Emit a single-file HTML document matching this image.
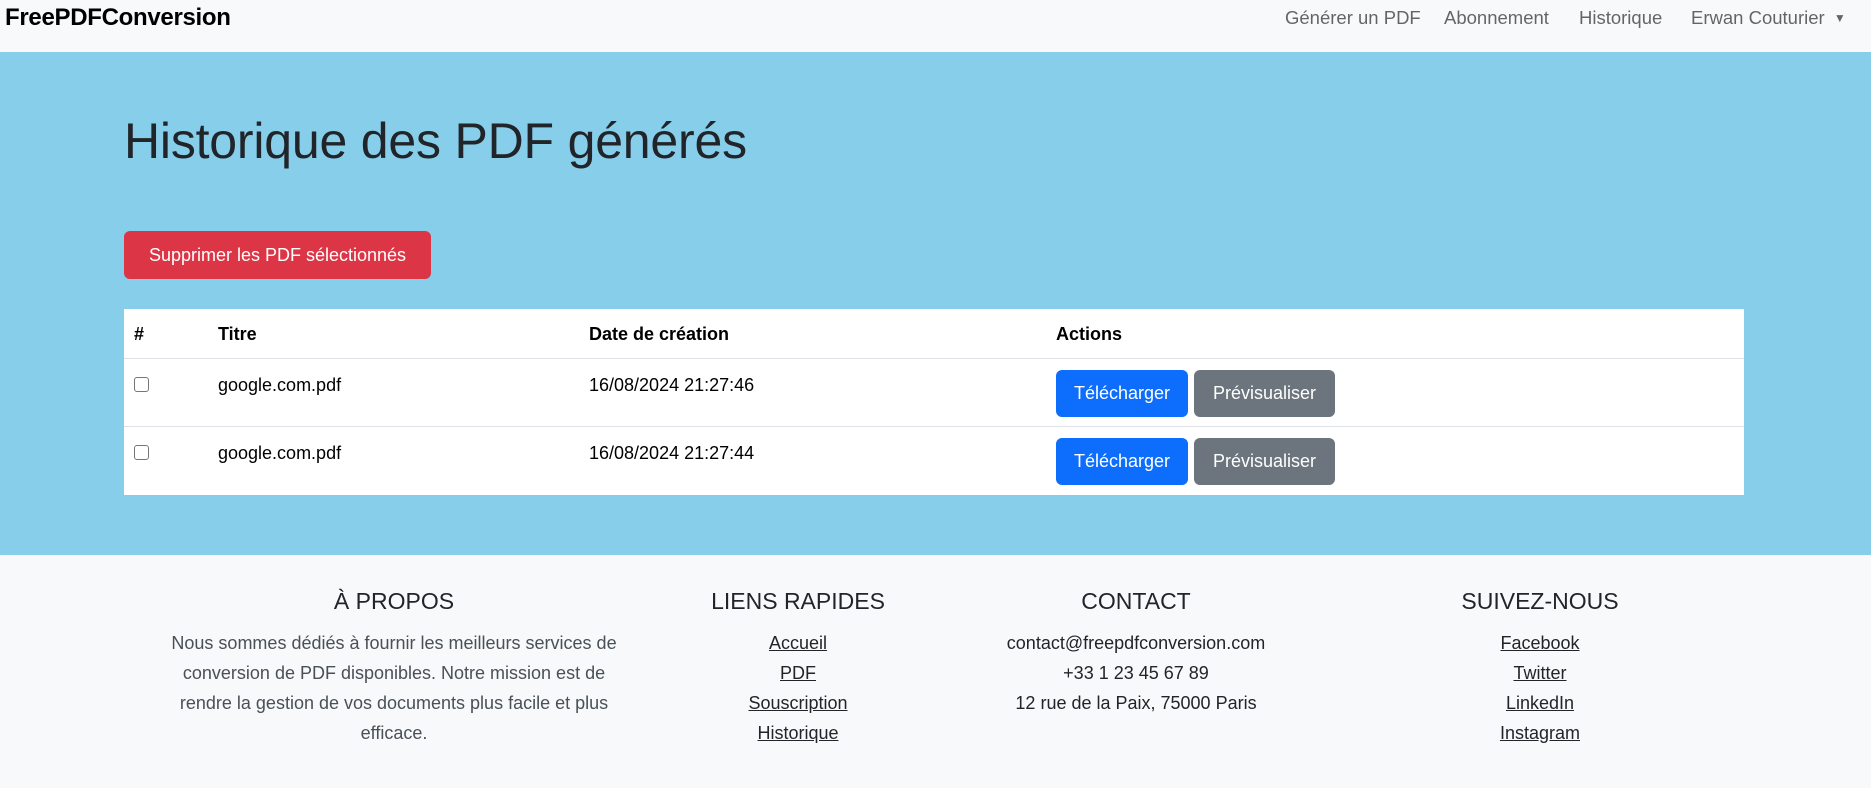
<!DOCTYPE html>
<html><head><meta charset="utf-8"><style>
*{margin:0;padding:0;box-sizing:border-box}
body{width:1871px;height:788px;overflow:hidden;font-family:"Liberation Sans",sans-serif;color:#212529;background:#f8f9fa;position:relative}
.nav{position:absolute;left:0;top:0;width:1871px;height:52px;background:#f8f9fa}
.brand{position:absolute;left:5px;top:4px;font-size:24px;font-weight:bold;color:#000;letter-spacing:-0.3px}
.nl{position:absolute;top:7px;font-size:18.5px;color:rgba(0,0,0,.6);white-space:nowrap}
.hero{position:absolute;left:0;top:52px;width:1871px;height:503px;background:#87ceeb}
h1{position:absolute;left:124px;top:112px;font-size:50px;font-weight:normal;color:#212529;letter-spacing:-0.2px}
.btn{position:absolute;color:#fff;font-size:18px;border-radius:6px;display:flex;align-items:center;justify-content:center;white-space:nowrap}
.red{left:124px;top:231px;width:307px;height:48px;background:#dc3545}
.table{position:absolute;left:124px;top:309px;width:1620px;height:186px;background:#fff}
.row{position:absolute;left:0;width:1620px;border-bottom:1px solid #dee2e6}
.c{position:absolute;font-size:18px;color:#000;white-space:nowrap}
.b{font-weight:bold}
.cb{position:absolute;left:10px;width:15px;height:15px;border:1px solid #767676;border-radius:3px;background:#fff}
.blue{background:#0d6efd}.gray{background:#6c757d}
.fh{position:absolute;top:588px;font-size:23px;font-weight:500;color:#212529;transform:translateX(-50%);white-space:nowrap}
.ft{position:absolute;top:628px;font-size:18px;line-height:30px;color:#212529;text-align:center;transform:translateX(-50%);white-space:nowrap}
.ft a{color:#212529;text-decoration:underline}
</style></head><body>
<div class="nav">
<div class="brand">FreePDFConversion</div>
<div class="nl" style="left:1285px">Générer un PDF</div>
<div class="nl" style="left:1444px">Abonnement</div>
<div class="nl" style="left:1579px">Historique</div>
<div class="nl" style="left:1691px">Erwan Couturier <span style="font-size:12px;position:relative;top:-2px;margin-left:4px">▼</span></div>
</div>
<div class="hero"></div>
<h1>Historique des PDF générés</h1>
<div class="btn red">Supprimer les PDF sélectionnés</div>
<div class="table">
<div class="row" style="top:0;height:50px">
<div class="c b" style="left:10px;top:15px">#</div>
<div class="c b" style="left:94px;top:15px">Titre</div>
<div class="c b" style="left:465px;top:15px">Date de création</div>
<div class="c b" style="left:932px;top:15px">Actions</div>
</div>
<div class="row" style="top:50px;height:68px">
<div class="cb" style="top:18px"></div>
<div class="c" style="left:94px;top:16px">google.com.pdf</div>
<div class="c" style="left:465px;top:16px">16/08/2024 21:27:46</div>
</div>
<div class="row" style="top:118px;height:68px;border:none">
<div class="cb" style="top:18px"></div>
<div class="c" style="left:94px;top:16px">google.com.pdf</div>
<div class="c" style="left:465px;top:16px">16/08/2024 21:27:44</div>
</div>
</div>
<div class="btn blue" style="left:1056px;top:370px;width:132px;height:47px">Télécharger</div>
<div class="btn gray" style="left:1194px;top:370px;width:141px;height:47px">Prévisualiser</div>
<div class="btn blue" style="left:1056px;top:438px;width:132px;height:47px">Télécharger</div>
<div class="btn gray" style="left:1194px;top:438px;width:141px;height:47px">Prévisualiser</div>

<div class="fh" style="left:394px">À PROPOS</div>
<div class="fh" style="left:798px">LIENS RAPIDES</div>
<div class="fh" style="left:1136px">CONTACT</div>
<div class="fh" style="left:1540px">SUIVEZ-NOUS</div>
<div class="ft" style="left:394px;color:#495057">Nous sommes dédiés à fournir les meilleurs services de<br>conversion de PDF disponibles. Notre mission est de<br>rendre la gestion de vos documents plus facile et plus<br>efficace.</div>
<div class="ft" style="left:798px"><a>Accueil</a><br><a>PDF</a><br><a>Souscription</a><br><a>Historique</a></div>
<div class="ft" style="left:1136px">contact@freepdfconversion.com<br>+33 1 23 45 67 89<br>12 rue de la Paix, 75000 Paris</div>
<div class="ft" style="left:1540px"><a>Facebook</a><br><a>Twitter</a><br><a>LinkedIn</a><br><a>Instagram</a></div>
</body></html>
